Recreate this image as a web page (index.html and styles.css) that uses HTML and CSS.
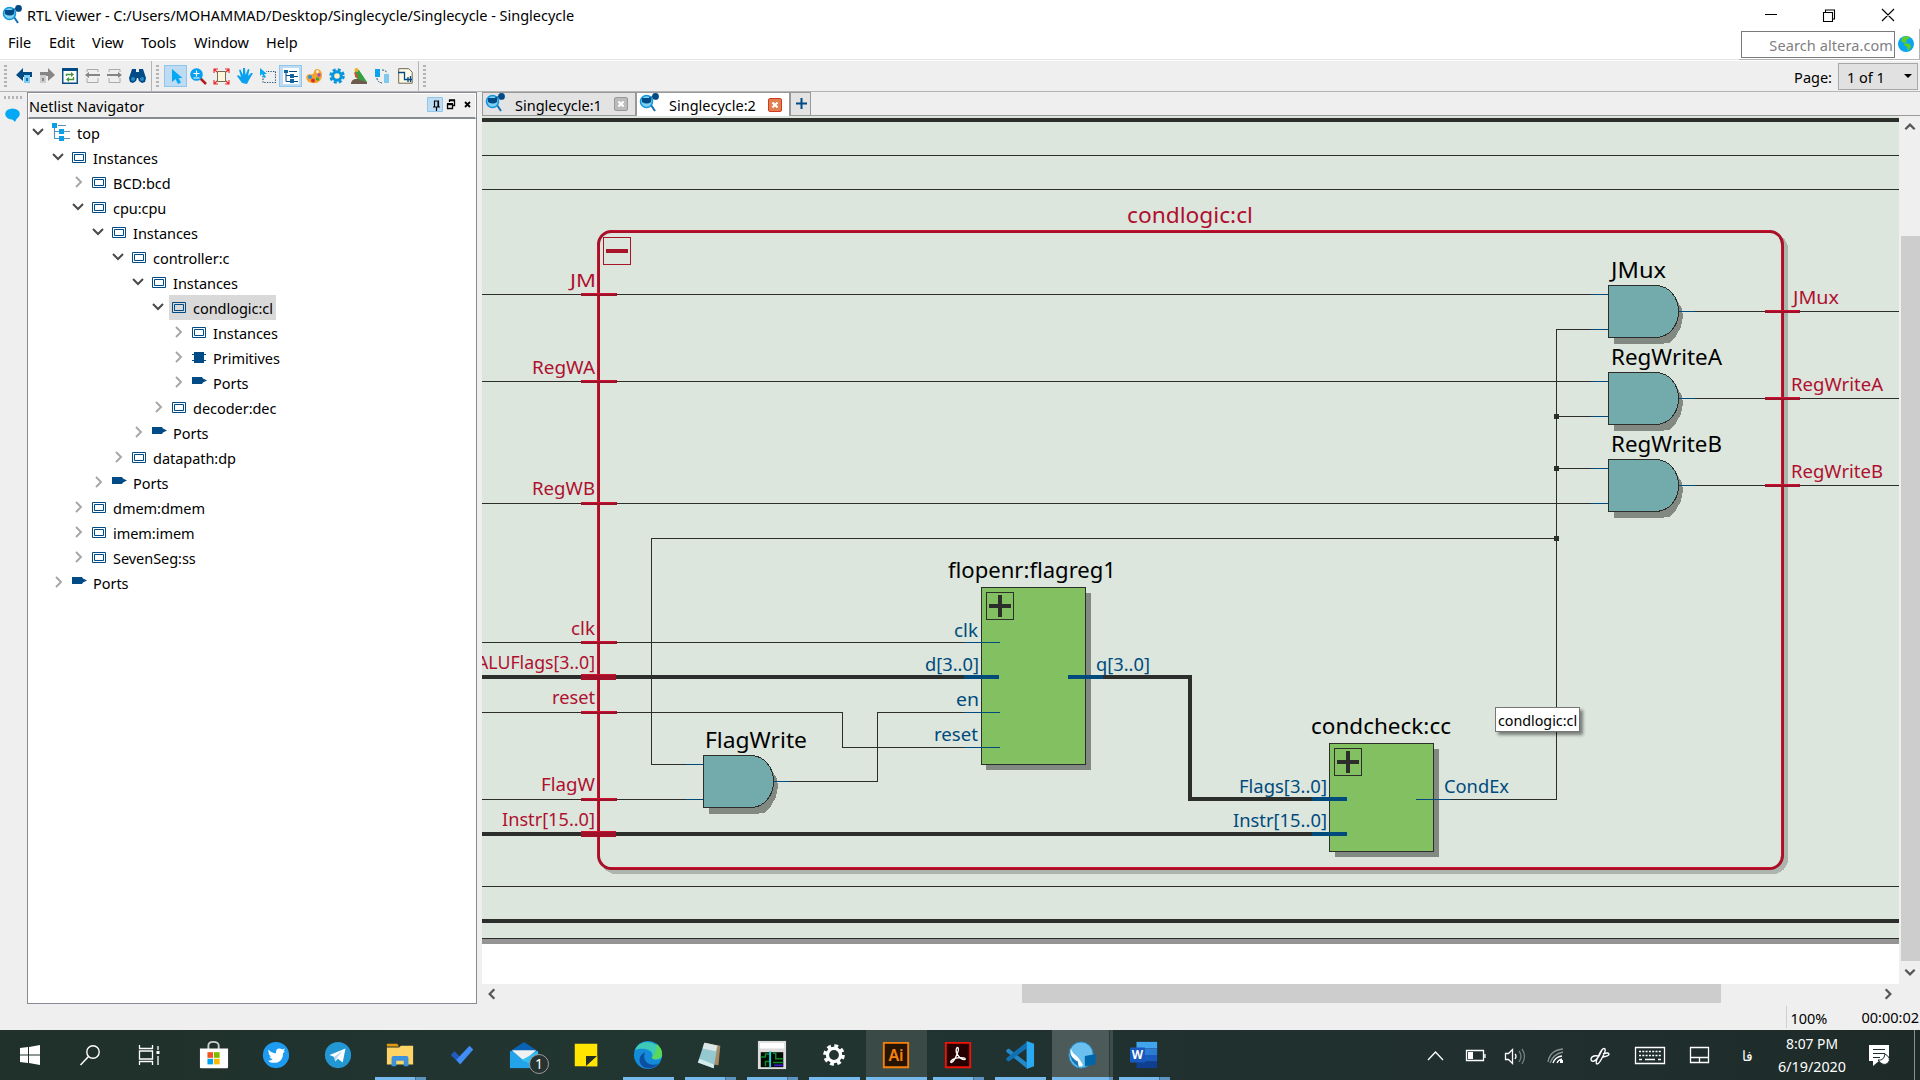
FILE: index.html
```html
<!DOCTYPE html>
<html lang="en">
<head>
<meta charset="utf-8">
<title>RTL Viewer</title>
<link rel="stylesheet" href="styles.css">
</head>
<body>
<svg class="defs" width="0" height="0">
  <defs>
    <symbol id="logo" viewBox="0 0 20 20"><path d="M12 12l4 6" stroke="#1670b0" stroke-width="2"/><circle cx="7.500" cy="8.500" r="6" fill="#7fd0f5" stroke="#1395dc" stroke-width="1.600"/><path d="M3 5h9v4q-4 3-9 0z" fill="#004a86"/><path d="M10 5l5-2" stroke="#004a86"/><circle cx="16.500" cy="3.400" r="3.400" fill="#004a86"/></symbol>
    <symbol id="inst" viewBox="0 0 14 11"><path d="M.5.5h13v10H.5zM2.500 2.500h9v6h-9z" fill="none" stroke="#004a86"/></symbol>
    <symbol id="port" viewBox="0 0 15 8"><path d="M0 0h10l1 1.500 4 2-4 2-1 1.500H0z" fill="#004a86"/></symbol>
    <symbol id="prim" viewBox="0 0 14 11"><path d="M2 0h10v11H2zM0 2h14v1H0zM0 8h14v1H0z" fill="#004a86"/></symbol>
    <symbol id="open" viewBox="0 0 12 12"><path d="M1 3l5 5 5-5" fill="none" stroke="#4a4a4a" stroke-width="2"/></symbol>
    <symbol id="shut" viewBox="0 0 12 12"><path d="M4 1l5 5-5 5" fill="none" stroke="#a6a6a6" stroke-width="1.900"/></symbol>
    <symbol id="gate" viewBox="0 0 78 60" overflow="visible"><path d="M6 6h48l8 2 7 7 5 9 1 8-2 10-5 9-7 7-5 .5H6z" fill="#828983"/><path d="M.5.5H48C62 1 70.500 13 70.500 26.500S62 52 48 52.500H.5z" fill="#73abad" stroke="#2b2e2b"/></symbol>
  </defs>
</svg>

<header class="titlebar">
  <svg class="logo"><use href="#logo"/></svg>
  <h1>RTL Viewer - C:/Users/MOHAMMAD/Desktop/Singlecycle/Singlecycle - Singlecycle</h1>
  <svg class="wincontrols" viewBox="0 0 140 28"><g fill="none" stroke="#000" stroke-width="1.100"><path d="M5 13.500h12M63.500 11.500h9v9h-9zM65.500 11.500v-2.500h9v9h-2.500M122 8l12 12M134 8l-12 12"/></g></svg>
</header>

<nav class="menubar">
  <span class="m-file">File</span><span class="m-edit">Edit</span><span class="m-view">View</span><span class="m-tools">Tools</span><span class="m-window">Window</span><span>Help</span>
  <div class="search"><div class="searchbox">Search altera.com</div>
    <svg width="18" height="18" viewBox="0 0 18 18"><circle cx="9" cy="9" r="8" fill="#0aa5f2"/><path d="M6 2l5-1 2 2-2 1-2 1 1 2-3 1-3-2zM8 8l5 1 1 3-3 4-1-4-3-2z" fill="#62cf20"/></svg>
  </div>
</nav>

<div class="toolbar">
  <div class="group g1">
    <i class="grip"></i>
    <svg width="16" height="16" viewBox="0 0 16 16"><path d="M0 7l7-7v4h9v5H7v4z" fill="#004a86"/><path d="M8 7h6v8H8z" fill="#7fcdf2"/><path d="M10 10h2v3h-2z" fill="#1670b0"/></svg>
    <svg width="16" height="16" viewBox="0 0 16 16"><path d="M16 7L9 0v4H1v4h8v5z" fill="#858585"/><path d="M1 7h6v8H1z" fill="#ccc"/><path d="M3 10h2v3H3z" fill="#888"/></svg>
    <svg width="16" height="16" viewBox="0 0 16 16"><path d="M.75.75h14.500v14.500H.75z" fill="#fff" stroke="#004a86" stroke-width="1.400"/><path d="M0 0h16v3H0z" fill="#004a86"/><path d="M4.500 8V6.500h5M11.500 9v2.500h-5" fill="none" stroke="#48953c" stroke-width="1.400"/><path d="M9 4l3 2.500L9 9zM7 9l-3 2.500L7 14z" fill="#48953c"/></svg>
    <svg width="15" height="16" viewBox="0 0 15 16"><path d="M2 4V1.500h11V4M2 10v4.500h11V10" fill="none" stroke="#aaa"/><path d="M0 7l4-3v2h11v2H4v2z" fill="#858585"/></svg>
    <svg width="15" height="16" viewBox="0 0 15 16"><path d="M2 4V1.500h11V4M2 10v4.500h11V10" fill="none" stroke="#aaa"/><path d="M15 7l-4-3v2H0v2h11v2z" fill="#858585"/></svg>
    <svg width="17" height="16" viewBox="0 0 17 16"><path d="M3 1h4v3h3V1h4l3 9-1 4-3 1-3-2-1-3H8l-1 3-3 2-3-1-1-4z" fill="#004a86"/><circle cx="4" cy="11" r="2" fill="#2b88c8"/><circle cx="13" cy="11" r="2" fill="#2b88c8"/></svg>
  </div>
  <div class="group g2">
    <i class="grip"></i>
    <span class="btn on"><svg width="16" height="16" viewBox="0 0 16 16"><path d="M4 1v13l3.500-3 2.500 5 3-1.500-2.500-4.500h4z" fill="#05a8f5"/></svg></span>
    <span class="btn"><svg width="17" height="17" viewBox="0 0 17 17"><path d="M10 10l6 6" stroke="#b11e1e" stroke-width="2.500"/><circle cx="6.500" cy="6.500" r="6.300" fill="#05a0ef"/><path d="M3.500 5.500h6M6.500 2.500v6M3.500 10h6" stroke="#fff" stroke-width="1.200"/></svg></span>
    <span class="btn"><svg width="17" height="17" viewBox="0 0 17 17"><path d="M4.500 3.500h8v10h-8z" fill="#fdf6da" stroke="#776c55"/><path d="M1 5V1h4M1 1l3 3M12 1h4v4M16 1l-3 3M1 12v4h4M1 16l3-3M16 12v4h-4M16 16l-3-3" fill="none" stroke="#e22" stroke-width="1.100"/></svg></span>
    <span class="btn"><svg width="16" height="16" viewBox="0 0 16 16"><path d="M5 15L0 8l1-1 3 2-2-7 1.500-.5L6 7V0h2l.5 7L11 1l1.500.5L11 8l3-3 2 0-4 7-2 4z" fill="#0aa2ee"/></svg></span>
    <span class="btn"><svg width="16" height="16" viewBox="0 0 16 16"><path d="M3 8v6.500h12.500V3.500H6" fill="none" stroke="#244e70" stroke-width="1.100" stroke-dasharray="1.300 1.300"/><path d="M0 0v8l2-2 2 4 2-1-2-3h3z" fill="#05a8f5"/></svg></span>
    <span class="btn on"><svg width="16" height="16" viewBox="0 0 16 16"><path d="M0 0h16v16H0z" fill="#fff"/><path d="M3 3v10.500M3 7.500h4M3 13.500h4M6 3.500h8M11 8.500h4M11 13.500h4" fill="none" stroke="#004a86"/><path d="M1 2h4v3H1zM7 6h4v4H7zM7 11h4v4H7z" fill="#10639d"/></svg></span>
    <span class="btn"><svg width="16" height="16" viewBox="0 0 16 16"><path d="M8 4c0-5 8-4 8 3 0 6-5 9-9 8-6 0-8-5-6-8 2-2 6 1 7-3z" fill="#f5a32f"/><circle cx="11.500" cy="3.500" r="1.500" fill="#fff3d8"/><circle cx="4" cy="9" r="2" fill="#2b90e0"/><circle cx="7" cy="12.500" r="2" fill="#d62e2e"/><circle cx="11.500" cy="11" r="1.800" fill="#46a53b"/><circle cx="13" cy="7" r="1.700" fill="#a04cc0"/></svg></span>
    <span class="btn"><svg width="16" height="16" viewBox="0 0 16 16"><circle cx="8" cy="8" r="6.500" fill="none" stroke="#0795dd" stroke-width="2.500" stroke-dasharray="3 2.100"/><circle cx="8" cy="8" r="4.300" fill="#fff1c9" stroke="#0795dd" stroke-width="3"/></svg></span>
    <span class="btn"><svg width="17" height="16" viewBox="0 0 17 16"><path d="M0 15q1-4 5-4l4-1 7 4v2H0z" fill="#6e5b50"/><path d="M4 1l4 1 4 6 4 6-7-2-5-3z" fill="#35a040"/><path d="M3 4l3 2 1 5-3-3z" fill="#dd4b27"/><circle cx="5.500" cy="2" r="2" fill="#efb028"/></svg></span>
    <span class="btn"><svg width="15" height="16" viewBox="0 0 15 16"><path d="M0 1h5v8H0z" fill="#0aa2ee"/><path d="M9 6h5v9H9z" fill="#7fc8ee"/><path d="M7 2q4 0 5 3M2 10q0 4 5 5" fill="none" stroke="#25567a" stroke-dasharray="2 1"/></svg></span>
    <span class="btn"><svg width="15" height="16" viewBox="0 0 15 16"><path d="M.7.700h10l3.500 3.500v11H.7z" fill="#fffbe5" stroke="#6e6755"/><path d="M0 4.500h6.500v7H14M10 9v5M12.500 8v6" fill="none" stroke="#004a86" stroke-width="1.300"/></svg></span>
  </div>
  <i class="grip g3"></i>
  <div class="page"><span>Page:</span><div class="combo"><span>1 of 1</span><i></i></div></div>
</div>

<main>
  <aside class="strip"><i class="hgrip"></i><svg width="16" height="14" viewBox="0 0 16 14"><ellipse cx="7.500" cy="6" rx="7.300" ry="5.500" fill="#05a8f5"/><path d="M6 10h6l-2 4z" fill="#05a8f5"/></svg></aside>
  <section class="navigator">
    <div class="navhead"><span>Netlist Navigator</span>
      <svg width="48" height="16" viewBox="0 0 48 16"><path d="M.5.500h15v14H.500z" fill="#bddcf4" stroke="#8fc6ee"/><g fill="none" stroke="#000" stroke-width="1.200"><path d="M7.500 10V4h4v6M6 10h7M9.500 10v4M11 4v6"/><path d="M20.500 7.500h5v4h-5zM20 6.700h6M22.500 5V3.500h5v5h-1.500M22 3h6" stroke-width="1.300"/><path d="M38 5l5 5M43 5l-5 5" stroke-width="1.800"/></g></svg>
    </div>
    <div class="tree">
      <div class="row l0"><svg class="ch"><use href="#open"/></svg><svg class="root" viewBox="0 0 19 18"><path d="M2.500 3v12.500H8M2.500 8.500H8M6 2.500h8M12 8.500h6M12 15.500h6" fill="none" stroke="#5b8fb8" stroke-width="1.100"/><path d="M0 0h5v5H0zM7 6h5v5H7zM7 13h5v5H7z" fill="#0aa0e8"/></svg><span>top</span></div>
      <div class="row l1"><svg class="ch"><use href="#open"/></svg><svg class="ic"><use href="#inst"/></svg><span>Instances</span></div>
      <div class="row l2"><svg class="ch"><use href="#shut"/></svg><svg class="ic"><use href="#inst"/></svg><span>BCD:bcd</span></div>
      <div class="row l2"><svg class="ch"><use href="#open"/></svg><svg class="ic"><use href="#inst"/></svg><span>cpu:cpu</span></div>
      <div class="row l3"><svg class="ch"><use href="#open"/></svg><svg class="ic"><use href="#inst"/></svg><span>Instances</span></div>
      <div class="row l4"><svg class="ch"><use href="#open"/></svg><svg class="ic"><use href="#inst"/></svg><span>controller:c</span></div>
      <div class="row l5"><svg class="ch"><use href="#open"/></svg><svg class="ic"><use href="#inst"/></svg><span>Instances</span></div>
      <div class="row l6"><svg class="ch"><use href="#open"/></svg><div class="sel"><svg class="ic"><use href="#inst"/></svg><span>condlogic:cl</span></div></div>
      <div class="row l7"><svg class="ch"><use href="#shut"/></svg><svg class="ic"><use href="#inst"/></svg><span>Instances</span></div>
      <div class="row l7"><svg class="ch"><use href="#shut"/></svg><svg class="ic"><use href="#prim"/></svg><span>Primitives</span></div>
      <div class="row l7"><svg class="ch"><use href="#shut"/></svg><svg class="po"><use href="#port"/></svg><span>Ports</span></div>
      <div class="row l6"><svg class="ch"><use href="#shut"/></svg><svg class="ic"><use href="#inst"/></svg><span>decoder:dec</span></div>
      <div class="row l5"><svg class="ch"><use href="#shut"/></svg><svg class="po"><use href="#port"/></svg><span>Ports</span></div>
      <div class="row l4"><svg class="ch"><use href="#shut"/></svg><svg class="ic"><use href="#inst"/></svg><span>datapath:dp</span></div>
      <div class="row l3"><svg class="ch"><use href="#shut"/></svg><svg class="po"><use href="#port"/></svg><span>Ports</span></div>
      <div class="row l2"><svg class="ch"><use href="#shut"/></svg><svg class="ic"><use href="#inst"/></svg><span>dmem:dmem</span></div>
      <div class="row l2"><svg class="ch"><use href="#shut"/></svg><svg class="ic"><use href="#inst"/></svg><span>imem:imem</span></div>
      <div class="row l2"><svg class="ch"><use href="#shut"/></svg><svg class="ic"><use href="#inst"/></svg><span>SevenSeg:ss</span></div>
      <div class="row l1"><svg class="ch"><use href="#shut"/></svg><svg class="po"><use href="#port"/></svg><span>Ports</span></div>
    </div>
  </section>

  <section class="work">
    <div class="tabs">
      <div class="tab"><svg class="logo"><use href="#logo"/></svg><span>Singlecycle:1</span><svg class="x" viewBox="0 0 14 14"><path d="M4 4l6 6M10 4l-6 6"/></svg></div>
      <div class="tab active"><svg class="logo"><use href="#logo"/></svg><span>Singlecycle:2</span><svg class="x" viewBox="0 0 14 14"><path d="M4 4l6 6M10 4l-6 6"/></svg></div>
      <div class="tab plus"><svg width="11" height="11" viewBox="0 0 11 11"><path d="M5.500 0v11M0 5.500h11" stroke="#004a86" stroke-width="2"/></svg></div>
    </div>
    <div class="view">
      <svg class="schematic" viewBox="482 116 1417 868" width="1417" height="868">
        <path d="M482 116h1417v822H482z" fill="#dce6dd"/>
        <path d="M482 939h1417v5H482z" fill="#949494"/>
        <rect class="shadow" x="601" y="234" width="1187" height="640" rx="15"/>
        <rect class="inside" x="598.500" y="231.500" width="1184" height="637" rx="13"/>
        <g class="bus"><path d="M482 120h1417M482 677H965M1102 677H1190V799H1313M482 834H1313M482 921H1899"/></g>
        <g class="wire">
          <path d="M482 155.500H1899M482 189.500H1899M482 886.500H1899M482 938.500H1899"/>
          <path d="M482 294.500H1592M482 381.500H1592M482 503.500H1592M1592 329.500H1556.500V799.500H1450M1556 416.500h36M1556 468.500h36"/>
          <path d="M1695 311.500H1899M1695 398.500H1899M1695 485.500H1899"/>
          <path d="M1556.500 538.500H651.500V764.500H687M482 799.500H686M482 642.500H965M482 712.500H842.500V747.500H965M790 781.500H877.500V712.500H965"/>
        </g>
        <path d="M1554 414h5v5h-5zM1554 466h5v5h-5zM1554 536h5v5h-5z" fill="#2b2e2b"/>
        <rect class="outline" x="598.500" y="231.500" width="1184" height="637" rx="13"/>
        <path class="hi" d="M612 230.500H1771M612 867.500H1771M597.500 245V856M1781.500 245V856"/>
        <path class="tick" d="M581 294.500h36M581 381.500h36M581 503.500h36M581 642.500h36M581 712.500h36M581 799.500h36M1765 311.500h35M1765 398.500h35M1765 485.500h35"/>
        <path class="tick wide" d="M581 677h35M581 834h35"/>
        <path class="hi" d="M581 293.500h35M581 380.500h35M581 502.500h35M581 641.500h35M581 674.500h35M581 711.500h35M581 798.500h35M581 831.500h35M1765 310.500h34M1765 397.500h34M1765 484.500h34"/>
        <path d="M603.500 237.500h27v27h-27z" fill="none" stroke="#a81428"/><path d="M606 249h22v4h-22z" fill="#a81428"/>

        <use href="#gate" x="1608" y="285" width="78" height="60"/>
        <use href="#gate" x="1608" y="372" width="78" height="60"/>
        <use href="#gate" x="1608" y="459" width="78" height="60"/>
        <use href="#gate" x="703" y="755" width="78" height="60"/>

        <path d="M986 593h105v177H986z" fill="#828983"/><rect class="block" x="981.500" y="587.500" width="104" height="177"/>
        <path d="M1335 749h104v108H1335z" fill="#828983"/><rect class="block" x="1329.500" y="743.500" width="104" height="108"/>
        <path d="M986.500 592.500h27v27h-27zM1334.500 748.500h27v27h-27z" fill="none" stroke="#2b2e2b"/>
        <path d="M989 606h22M1000 595v22M1337 762h22M1348 751v22" stroke="#2b2e2b" stroke-width="4"/>

        <path class="pin" d="M1591 294.500h17M1591 329.500h17M1591 381.500h17M1591 416.500h17M1591 468.500h17M1591 503.500h17M1679 311.500h16M1679 398.500h16M1679 485.500h16M686 764.500h17M686 799.500h17M774 781.500h16M964 642.500h36M964 712.500h36M964 747.500h36M1416 799.500h35"/>
        <path class="pin wide" d="M964 677h35M1068 677h35M1312 799h35M1312 834h35"/>

        <g class="big">
          <text x="1611" y="278" textLength="55" lengthAdjust="spacingAndGlyphs">JMux</text><text x="1611" y="365" textLength="111" lengthAdjust="spacingAndGlyphs">RegWriteA</text><text x="1611" y="452" textLength="111" lengthAdjust="spacingAndGlyphs">RegWriteB</text>
          <text x="948" y="578" textLength="168" lengthAdjust="spacingAndGlyphs">flopenr:flagreg1</text><text x="705" y="748" textLength="102" lengthAdjust="spacingAndGlyphs">FlagWrite</text><text x="1311" y="734" textLength="140" lengthAdjust="spacingAndGlyphs">condcheck:cc</text>
          <text class="red" x="1127" y="223" textLength="126" lengthAdjust="spacingAndGlyphs">condlogic:cl</text>
        </g>
        <g class="small red">
          <text x="570" y="287" textLength="26" lengthAdjust="spacingAndGlyphs">JM</text><text x="532" y="374" textLength="63" lengthAdjust="spacingAndGlyphs">RegWA</text><text x="532" y="495" textLength="63" lengthAdjust="spacingAndGlyphs">RegWB</text><text x="571" y="635" textLength="24" lengthAdjust="spacingAndGlyphs">clk</text>
          <text x="477" y="669" textLength="118" lengthAdjust="spacingAndGlyphs">ALUFlags[3..0]</text><text x="552" y="704" textLength="43" lengthAdjust="spacingAndGlyphs">reset</text><text x="541" y="791" textLength="54" lengthAdjust="spacingAndGlyphs">FlagW</text><text x="502" y="826" textLength="93" lengthAdjust="spacingAndGlyphs">Instr[15..0]</text>
          <text x="1793" y="304" textLength="46" lengthAdjust="spacingAndGlyphs">JMux</text><text x="1791" y="391" textLength="92" lengthAdjust="spacingAndGlyphs">RegWriteA</text><text x="1791" y="478" textLength="92" lengthAdjust="spacingAndGlyphs">RegWriteB</text>
        </g>
        <g class="small blue">
          <text x="954" y="637" textLength="24" lengthAdjust="spacingAndGlyphs">clk</text><text x="925" y="671" textLength="54" lengthAdjust="spacingAndGlyphs">d[3..0]</text><text x="956" y="706" textLength="23" lengthAdjust="spacingAndGlyphs">en</text><text x="934" y="741" textLength="44" lengthAdjust="spacingAndGlyphs">reset</text><text x="1096" y="671" textLength="54" lengthAdjust="spacingAndGlyphs">q[3..0]</text>
          <text x="1239" y="793" textLength="88" lengthAdjust="spacingAndGlyphs">Flags[3..0]</text><text x="1233" y="827" textLength="94" lengthAdjust="spacingAndGlyphs">Instr[15..0]</text><text x="1444" y="793" textLength="65" lengthAdjust="spacingAndGlyphs">CondEx</text>
        </g>
      </svg>
      <div class="tooltip">condlogic:cl</div>
      <div class="vbar"><svg viewBox="0 0 12 12"><path d="M2 8l4-4 4 4"/></svg><i></i><svg viewBox="0 0 12 12"><path d="M2 4l4 4 4-4"/></svg></div>
      <div class="hbar"><svg viewBox="0 0 12 12"><path d="M8 2L4 6l4 4"/></svg><i></i><svg viewBox="0 0 12 12"><path d="M4 2l4 4-4 4"/></svg></div>
    </div>
  </section>
</main>

<footer class="status"><span class="zoomlevel">100%</span><span>00:00:02</span></footer>

<div class="taskbar">
  <div class="sys"><svg width="20" height="20" viewBox="0 0 20 20"><path d="M0 3l8-1v7.500H0zM9 2l11-2v9.500H9zM0 10.500h8V18l-8-1zM9 10.500h11V20L9 18z" fill="#fff"/></svg></div>
  <div class="sys"><svg width="22" height="22" viewBox="0 0 22 22"><circle cx="14" cy="8" r="6.200" fill="none" stroke="#fff" stroke-width="1.400"/><path d="M9.500 12.500L1.500 21" stroke="#fff" stroke-width="1.500"/></svg></div>
  <div class="sys last"><svg width="22" height="20" viewBox="0 0 22 20"><path d="M1.500 0v3.500h13V0M1.500 20v-3.500h13V20M1.500 6h13v8h-13zM20 1v4M20 11v9" fill="none" stroke="#fff" stroke-width="1.300"/><path d="M18.500 6h3v3h-3z" fill="#fff"/></svg></div>
  <div class="app"><svg viewBox="0 0 32 32"><path d="M10 10V6q0-4 5-4 6 0 6 4v4" fill="none" stroke="#ccc" stroke-width="2"/><path d="M1 9h30v20q0 1-1 1H2q-1 0-1-1z" fill="#fff"/><path d="M9 13h6v6H9z" fill="#f25022"/><path d="M16 13h6v6h-6z" fill="#7fba00"/><path d="M9 20h6v6H9z" fill="#00a4ef"/><path d="M16 20h6v6h-6z" fill="#ffb900"/></svg></div>
  <div class="app"><svg viewBox="0 0 32 32"><circle cx="16" cy="16" r="14" fill="#1d9bf0"/><path d="M8 10q3 4 8 4-.5-5 3.500-5 2 0 3 1l3-1-1.500 3 1.500 0-2 2c0 12-12 12-16 8q4 0 5-1.500-3-1-3.500-3h2q-3-1.500-3-4l1 .5Q7 12 8 10z" fill="#fff"/></svg></div>
  <div class="app"><svg viewBox="0 0 32 32"><circle cx="16" cy="16" r="14" fill="#2297d3"/><path d="M7 16l17-7-3 15-5-4-3 3-1-5z" fill="#fff"/><path d="M12 18l9-7-6 8-2 4z" fill="#b9d9ec"/></svg></div>
  <div class="app run more"><svg viewBox="0 0 32 32"><path d="M2 4h11l2 3H2z" fill="#e19a0d"/><path d="M2 8h13l2-2h13v20H2z" fill="#ffd466"/><path d="M7 28v-9q0-2 2-2h14q2 0 2 2v9h-5v-6h-8v6z" fill="#3c92dc"/></svg></div>
  <div class="app"><svg viewBox="0 0 32 32"><path d="M4 16l4-4 7 7-2 6z" fill="#225ac0"/><path d="M24 6l4 4-14 16-4-5z" fill="#3f8df5"/></svg></div>
  <div class="app mail"><svg viewBox="0 0 32 32"><path d="M1 12L16 2l15 10v2H1z" fill="#0a62b5"/><path d="M1 12h30v18H1z" fill="#23a3ea"/><path d="M3 11h26L16 22z" fill="#f1f1f1"/><path d="M31 12v18L14 21z" fill="#35c0f0"/></svg><b>1</b></div>
  <div class="app"><svg viewBox="0 0 32 32"><path d="M4 4h24v24H4z" fill="#ffe500"/><path d="M16 28V17h12z" fill="#222e26"/><path d="M16 28h12V17z" fill="#ffe500"/></svg></div>
  <div class="app run"><svg viewBox="0 0 32 32"><circle cx="16" cy="16" r="15" fill="#138bd8"/><path d="M2 11C6-2 28-1 31 15c1 7-9 7-11 4 4-8-9-12-18-8z" fill="#3dcbb8"/><path d="M20 19q3 4 11-2 1-8-6-13 1 9-5 15z" fill="#5ad85a"/><path d="M13 13c-4 8 4 17 14 12-8 10-21 4-20-5 1-4 3-6 6-7z" fill="#0c4fa2"/></svg></div>
  <div class="app run more"><svg viewBox="0 0 32 32"><path d="M11 3l16 3-2 21-18-3z" fill="#a88b62"/><path d="M10 3l14 3-4 24-17-6z" fill="#94c9d0"/><path d="M10 3l14 3-2 6-14-3z" fill="#dce8e8"/><path d="M5 20l15 6v4L3 24z" fill="#d5ecec"/></svg></div>
  <div class="app run more"><svg viewBox="0 0 32 32"><path d="M1 1h30v30H1z" fill="#ddd"/><path d="M3 3h26v6H3z" fill="#fff"/><path d="M4 13h24v16H4z" fill="#020802"/><path d="M4 18h5v-3h5v8H9v5M17 14h3v6h8M17 24h11" fill="none" stroke="#0a8a2c" stroke-width="1.600"/><path d="M14 12v17" stroke="#22d2e5" stroke-width="2"/><path d="M18 27h10" stroke="#3a18c0" stroke-width="2"/></svg></div>
  <div class="app run"><svg viewBox="0 0 32 32"><circle cx="16" cy="16" r="9.500" fill="none" stroke="#fff" stroke-width="4" stroke-dasharray="4 3.460"/><circle cx="16" cy="16" r="7" fill="none" stroke="#fff" stroke-width="3.500"/></svg></div>
  <div class="app run hot"><svg viewBox="0 0 32 32"><path d="M3 3h26v26H3z" fill="#261300" stroke="#f7800c" stroke-width="2"/><text x="16" y="22" text-anchor="middle" font-size="17" font-weight="600" fill="#f7800c">Ai</text></svg></div>
  <div class="app run more"><svg viewBox="0 0 32 32"><path d="M3 3h26v26H3z" fill="#260000" stroke="#ed1409" stroke-width="2"/><path d="M15 8q3 0 0 7-3 8-6 9-2 0 1-3 5-3 12-2 3 1 1 2-4 0-8-6-2-4 0-7z" fill="none" stroke="#fff" stroke-width="1.400"/></svg></div>
  <div class="app run"><svg viewBox="0 0 32 32"><path d="M1 11l3-2 19 15v6L2 13z" fill="#2489ca"/><path d="M1 21l3 2L23 9V2L2 19z" fill="#1070b3"/><path d="M23 1l8 3v24l-8 3z" fill="#2aaaf2"/></svg></div>
  <div class="app run more active"><svg viewBox="0 0 32 32"><ellipse cx="15" cy="16" rx="13" ry="14" fill="#6cc0ef" stroke="#2286c4"/><path d="M4 6q-1 5 5 10 5 4 8 11-2 2-5 1Q3 24 4 6z" fill="#fff"/><path d="M2.500 12q1 12 10 17l-1-6Q4 19 2.500 12z" fill="#1477b8"/><path d="M19 17l12-2-1 11-11 2z" fill="#0066aa"/></svg></div>
  <div class="app run more"><svg viewBox="0 0 32 32"><path d="M8 2h22v7H8z" fill="#41a5ee"/><path d="M8 9h22v7H8z" fill="#2b7cd3"/><path d="M8 16h22v7H8z" fill="#185abd"/><path d="M8 23h22v7H8z" fill="#103f91"/><path d="M1 8h16v16H1z" fill="#1859bd"/><text x="9" y="20.500" text-anchor="middle" font-size="12.500" font-weight="700" fill="#fff">W</text></svg></div>
  <div class="tray">
    <svg width="493" height="50" viewBox="1427 1030 493 50">
      <g fill="none" stroke="#fff" stroke-width="1.300">
        <path d="M1428 1060l7.500-8 7.500 8"/><path d="M1466.500 1050.500h17v10h-17zM1485 1054v4"/>
        <path d="M1505.500 1053.500h3l4-4v14l-4-4h-3zM1515 1054q2 2 0 5"/><path d="M1519 1051q4 5 0 11M1522 1049q5 7 0 15" stroke="#73807f"/>
        <path d="M1553 1063q2-6 9-7M1557 1063q1-3 5-4"/><path d="M1548 1062q2-12 15-13M1550 1063q3-9 13-11" stroke="#87918f"/>
        <path d="M1598 1056q-6-1-7 3 0 3 3 2 4-2 7-9 2-5 4-3 1 2-3 9-3 6-5 6-2-1 1-7 3-7 5-8M1603 1054q5-2 6 0 0 2-6 3" stroke-width="1.400"/>
        <path d="M1635.500 1047.500h29v16h-29z"/><path d="M1639 1051.500h22M1639 1055.500h22" stroke-dasharray="2 1.300"/><path d="M1639 1059.500h3M1645 1059.500h10M1658 1059.500h3"/>
        <path d="M1690.500 1047.500h18v15h-18zM1690 1057.500h19M1699.500 1057v6"/>
        <path d="M1914.500 1030v50" stroke="#87918f" stroke-width="1"/>
      </g>
      <path d="M1468 1052h5v7h-5zM1560 1060h3v3h-3z" fill="#fff"/>
      <path d="M1869 1045h20v16h-10l-6 5v-5h-4z" fill="#fff"/><path d="M1873 1049.500h12M1873 1053.500h12M1873 1057.500h7" stroke="#1f2e2d" stroke-width="1.200"/><path d="M1885 1054q-1 7-7 6 5 7 10 3 4-5-3-9z" fill="#fff" stroke="#1f2e2d"/>
      <g fill="#fff" text-anchor="middle"><text x="1747" y="1061" font-size="14">فا</text><text x="1812" y="1049" font-size="14.500" textLength="52" lengthAdjust="spacingAndGlyphs">8:07 PM</text><text x="1812" y="1072" font-size="14.500" textLength="68" lengthAdjust="spacingAndGlyphs">6/19/2020</text></g>
    </svg>
  </div>
</div>
</body>
</html>
```
FILE: styles.css
```css
* { box-sizing: border-box; }
body { margin: 0; width: 1920px; height: 1080px; overflow: hidden; display: flex; flex-direction: column; background: #efefef; color: #000; font: 14.5px/20px "Noto Sans", "Open Sans", sans-serif; }
svg { display: block; flex: none; }
.defs { position: absolute; }
.logo { width: 20px; height: 20px; }

.titlebar { height: 29px; background: #fff; display: flex; align-items: center; padding: 0 20px 0 2px; }
.titlebar h1 { margin: 0 auto 0 5px; font-size: 14.5px; font-weight: 400; letter-spacing: -.02px; }
.wincontrols { width: 140px; height: 28px; }

.menubar { height: 31px; background: #fff; border-bottom: 1px solid #e5e5e5; display: flex; padding-left: 8px; line-height: 27px; }
.m-file { width: 41px; } .m-edit { width: 43px; } .m-view { width: 49px; } .m-tools { width: 53px; } .m-window { width: 72px; }
.search { margin-left: auto; width: 181px; height: 31px; display: flex; padding: 2px 0 2px 2px; gap: 2px; border-bottom: 1px solid #b4b4b4; border-right: 1px solid #b4b4b4; }
.search svg { margin-top: 4px; }
.searchbox { width: 154px; height: 27px; border: 1px solid #7a7a7a; text-align: right; color: #7f7f7f; padding-right: 1px; line-height: 27px; letter-spacing: .1px; }

.toolbar { height: 32px; display: flex; align-items: center; border-bottom: 1px solid #b4b4b4; border-top: 1px solid #fff; }
.group { height: 31px; display: flex; align-items: center; border-right: 1px solid #b4b4b4; }
.grip { width: 3px; height: 23px; background: repeating-linear-gradient(#b4b4b4 0 2px, #efefef 2px 4px); }
.g1 { width: 152px; padding-left: 4px; gap: 7px; }
.g1 .grip { margin-right: 2px; }
.g2 { width: 267px; padding-left: 4px; }
.g2 .grip { margin-right: 5px; }
.btn { width: 23px; height: 22px; flex: none; display: flex; align-items: center; justify-content: center; }
.btn.on { background: #bddcf4; border: 1px solid #8fc6ee; }
.g3 { margin-left: 4px; }
.page { margin-left: auto; display: flex; align-items: center; gap: 6px; padding-right: 2px; }
.page > span { padding-top: 2px; }
.combo { width: 80px; height: 27px; border: 1px solid #a8a8a8; background: #e1e1e1; display: flex; align-items: center; justify-content: space-between; padding: 2px 5px 0 8px; }
.combo i { border: 4px solid transparent; border-top: 4px solid #000; border-bottom: 0; margin-top: -3px; }

main { height: 912px; display: flex; }
.strip { width: 27px; padding: 4px 0 0 4px; }
.hgrip { display: block; width: 19px; height: 3px; background: repeating-linear-gradient(90deg, #b4b4b4 0 2px, #efefef 2px 4px); }
.strip svg { margin: 9px 0 0 1px; }
.navigator { width: 450px; height: 912px; border: 1px solid #868b94; background: #fff; }
.navhead { height: 26px; background: #efefef; border: 1px solid #fff; border-bottom: 2px solid #868b94; display: flex; justify-content: space-between; line-height: 25px; }
.navhead svg { margin-top: 3px; }
.tree { padding-top: 1px; line-height: 25px; }
.row { height: 25px; display: flex; align-items: center; padding-left: 4px; }
.row span { padding-top: 1px; letter-spacing: -.04px; }
.ch { width: 12px; height: 12px; margin: 0 8px 1px 0; }
.ic { width: 14px; height: 11px; margin: 0 7px 0 0; }
.po { width: 15px; height: 8px; margin: -3px 6px 0 0; }
.root { width: 19px; height: 18px; margin: -2px 6px 0 0; }
.l1 { padding-left: 24px; } .l2 { padding-left: 44px; } .l3 { padding-left: 64px; } .l4 { padding-left: 84px; } .l5 { padding-left: 104px; } .l6 { padding-left: 124px; } .l7 { padding-left: 144px; }
.sel { height: 25px; display: flex; align-items: center; background: #d9d9d9; margin-left: -3px; padding: 0 3px; }

.work { width: 1438px; margin-left: 5px; display: flex; flex-direction: column; }
.tabs { height: 24px; display: flex; border-bottom: 1px solid #999; }
.tab { height: 23px; border: 1px solid #999; border-bottom: 0; width: 154px; display: flex; align-items: center; padding: 0 7px 0 2px; background: #e3e3e3; }
.tab span { margin: 1px auto 0 10px; }
.tab .logo { margin-top: -3px; }
.tab.active { background: #fff; height: 24px; }
.tab.plus { width: 21px; padding: 0 4px 2px 5px; }
.x { width: 14px; height: 14px; border: 1px solid #999; border-radius: 2px; background: #bbb; fill: none; stroke: #fff; stroke-width: 2.4; }
.active .x { background: #e08050; border-color: #d23a20; }

.view { position: relative; display: grid; grid-template-columns: 1417px 21px; grid-template-rows: 868px 20px; background: #efefef; }
.schematic { background: #fff; shape-rendering: crispEdges; }
.schematic text { shape-rendering: auto; }
.wire { fill: none; stroke: #2b2e2b; }
.bus { fill: none; stroke: #2b2e2b; stroke-width: 4; }
.shadow { fill: #acb4ad; }
.inside { fill: #dce6dd; }
.outline { fill: none; stroke: #a81028; stroke-width: 3; shape-rendering: auto; }
.hi { fill: none; stroke: #cc1030; }
.tick { stroke: #a01028; stroke-width: 3; }
.tick.wide { stroke-width: 6; }
.pin { stroke: #004a7c; }
.pin.wide { stroke-width: 4; }
.block { fill: #83c062; stroke: #2b2e2b; }
.big { font-size: 22px; }
.small { font-size: 18px; }
.red { fill: #b01030; }
.blue { fill: #004a7c; }
.tooltip { position: absolute; left: 1013px; top: 591px; width: 85px; height: 25px; border: 1px solid #767676; background: #fff; font-size: 14.3px; line-height: 26px; text-align: center; white-space: nowrap; box-shadow: 3px 3px 3px rgba(0,0,0,.45); }
.vbar { display: flex; flex-direction: column; align-items: center; padding: 4px 0 5px 1px; }
.vbar svg, .hbar svg { width: 14px; height: 14px; fill: none; stroke: #555; stroke-width: 1.9; }
.vbar i { width: 19px; height: 726px; background: #cdcdcd; margin: 102px 0 4px; }
.hbar { display: flex; align-items: center; padding: 0 0 1px 3px; }
.hbar i { width: 699px; height: 19px; background: #cdcdcd; margin: 0 160px 0 523px; }

.status { height: 26px; display: flex; justify-content: flex-end; align-items: center; padding-right: 1px; }
.status span { line-height: 24px; }
.zoomlevel { width: 75px; border-left: 1px solid #d0d0d0; padding-left: 3px; height: 22px; }

.taskbar { height: 50px; background: linear-gradient(90deg, #20302b, #223631 35%, #20302f 65%, #21302f 78%, #1d2a28); display: flex; }
.sys { width: 60px; display: flex; align-items: center; justify-content: center; }
.sys.last { width: 62px; padding-right: 4px; }
.app { width: 62px; height: 50px; display: flex; align-items: center; justify-content: center; position: relative; padding-left: 1px; }
.app svg { width: 30px; height: 30px; }
.run::after { content: ""; position: absolute; left: 7px; right: 4px; bottom: 0; height: 3px; background: #76b9ed; }
.run.more::after { background: linear-gradient(90deg, #76b9ed 40px, #4a6f88 40px 41px, #5c93bf 41px); }
.hot::before, .active.app::before { content: ""; position: absolute; left: 2px; right: -1px; top: 0; bottom: 0; background: #3a4a47; }
.hot svg, .active.app svg { position: relative; }
.hot::after { left: 2px; right: -1px; }
.active.app::before { background: linear-gradient(90deg, #4c5b59 57px, #2b3836 57px 58px, #3e4d4a 58px); }
.run.more.active::after { left: 2px; right: -1px; background: linear-gradient(90deg, #76b9ed 57px, #5c93bf 57px); }
.mail b { position: absolute; left: 37px; top: 24px; width: 20px; height: 20px; border: 1px solid #999; border-radius: 50%; background: #263330; color: #fff; font: 14px/18px "Noto Sans", sans-serif; text-align: center; }
.tray { margin-left: auto; }
```
